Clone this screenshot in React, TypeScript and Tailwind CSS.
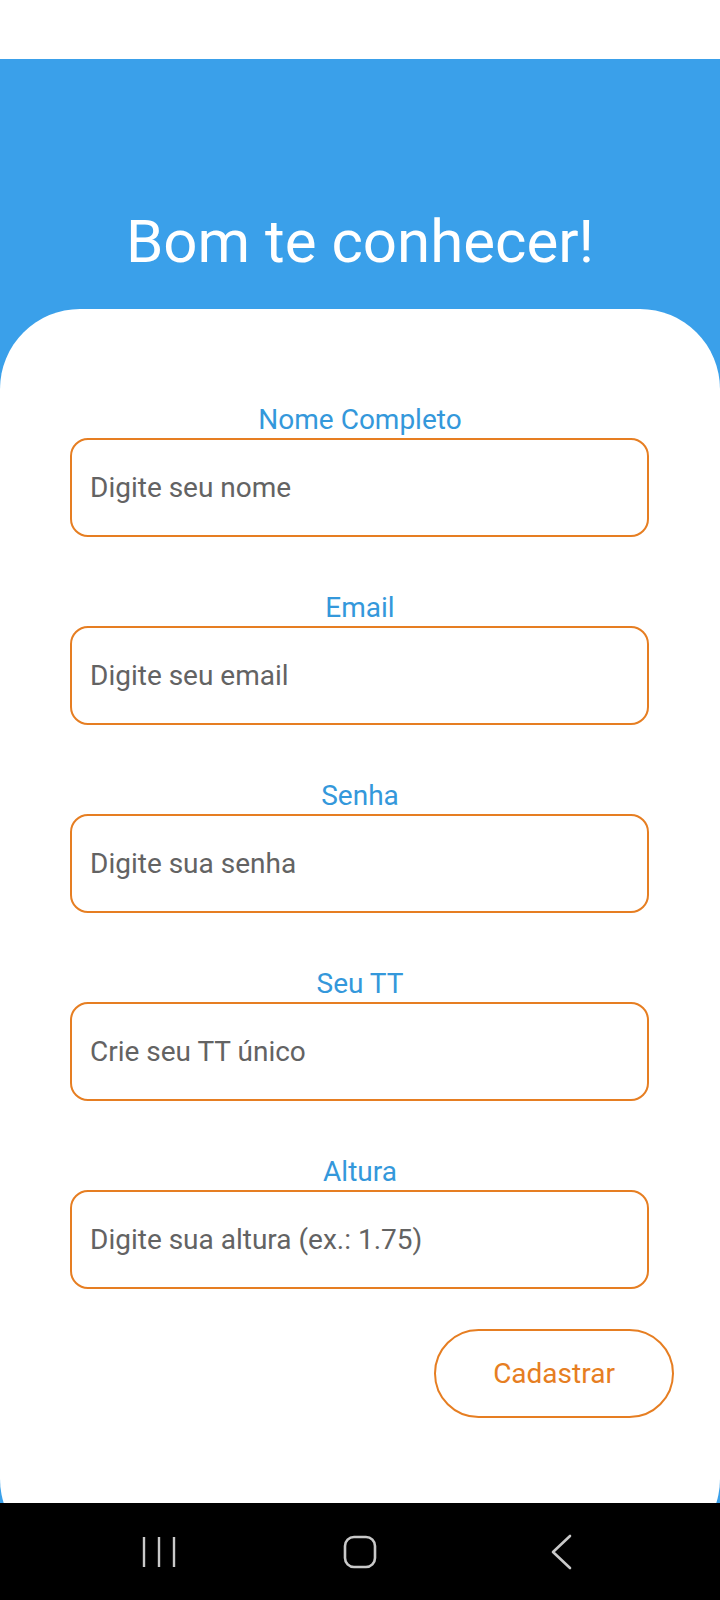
import React from 'react'

const fields = [
  { label: 'Nome Completo', placeholder: 'Digite seu nome', type: 'text' },
  { label: 'Email', placeholder: 'Digite seu email', type: 'email' },
  { label: 'Senha', placeholder: 'Digite sua senha', type: 'password' },
  { label: 'Seu TT', placeholder: 'Crie seu TT único', type: 'text' },
  { label: 'Altura', placeholder: 'Digite sua altura (ex.: 1.75)', type: 'text' },
]

export default function App() {
  return (
    <div className="w-[720px] h-[1600px] flex flex-col bg-white overflow-hidden font-['Roboto',sans-serif]">
      {/* status bar area */}
      <div className="h-[59px] bg-white shrink-0"></div>

      <div className="h-[1444px] shrink-0 bg-[#3aa0ea] flex flex-col overflow-hidden">
        <h1 className="mt-[153px] text-center text-white text-[60px] leading-[60px] font-normal">
          Bom te conhecer!
        </h1>

        <div className="mt-[37px] shrink-0 h-[1250px] bg-white rounded-[80px] pt-[95px] flex flex-col">
          {fields.map((f, i) => (
            <div key={i} className={`flex flex-col ${i > 0 ? 'mt-[55px]' : ''}`}>
              <label className="text-center text-[#3498db] text-[28px] leading-[32px] mb-[2px]">
                {f.label}
              </label>
              <input
                type={f.type}
                placeholder={f.placeholder}
                className="ml-[70px] w-[579px] h-[99px] border-2 border-[#e67e22] rounded-[18px] pl-[18px] text-[28px] text-[#333] placeholder:text-[#636363] outline-none bg-white"
              />
            </div>
          ))}

          <div className="flex justify-end mt-[40px] pr-[46px]">
            <button className="w-[240px] h-[89px] rounded-full border-2 border-[#e67e22] text-[#e67e22] text-[28px] font-normal bg-white">
              Cadastrar
            </button>
          </div>
        </div>
      </div>

      {/* android nav bar */}
      <div className="h-[97px] shrink-0 bg-black flex items-center justify-center gap-[161px]">
        <svg width="40" height="40" viewBox="0 0 40 40">
          <line x1="5" y1="5" x2="5" y2="35" stroke="#c9c9c9" strokeWidth="2.4" />
          <line x1="20" y1="5" x2="20" y2="35" stroke="#c9c9c9" strokeWidth="2.4" />
          <line x1="35" y1="5" x2="35" y2="35" stroke="#c9c9c9" strokeWidth="2.4" />
        </svg>
        <svg width="40" height="40" viewBox="0 0 40 40">
          <rect x="5" y="5" width="30" height="30" rx="9" fill="none" stroke="#c9c9c9" strokeWidth="2.6" />
        </svg>
        <svg width="40" height="40" viewBox="0 0 40 40">
          <polyline points="29,4 12,20 29,36" fill="none" stroke="#c9c9c9" strokeWidth="2.6" strokeLinecap="round" strokeLinejoin="round" />
        </svg>
      </div>
    </div>
  )
}
